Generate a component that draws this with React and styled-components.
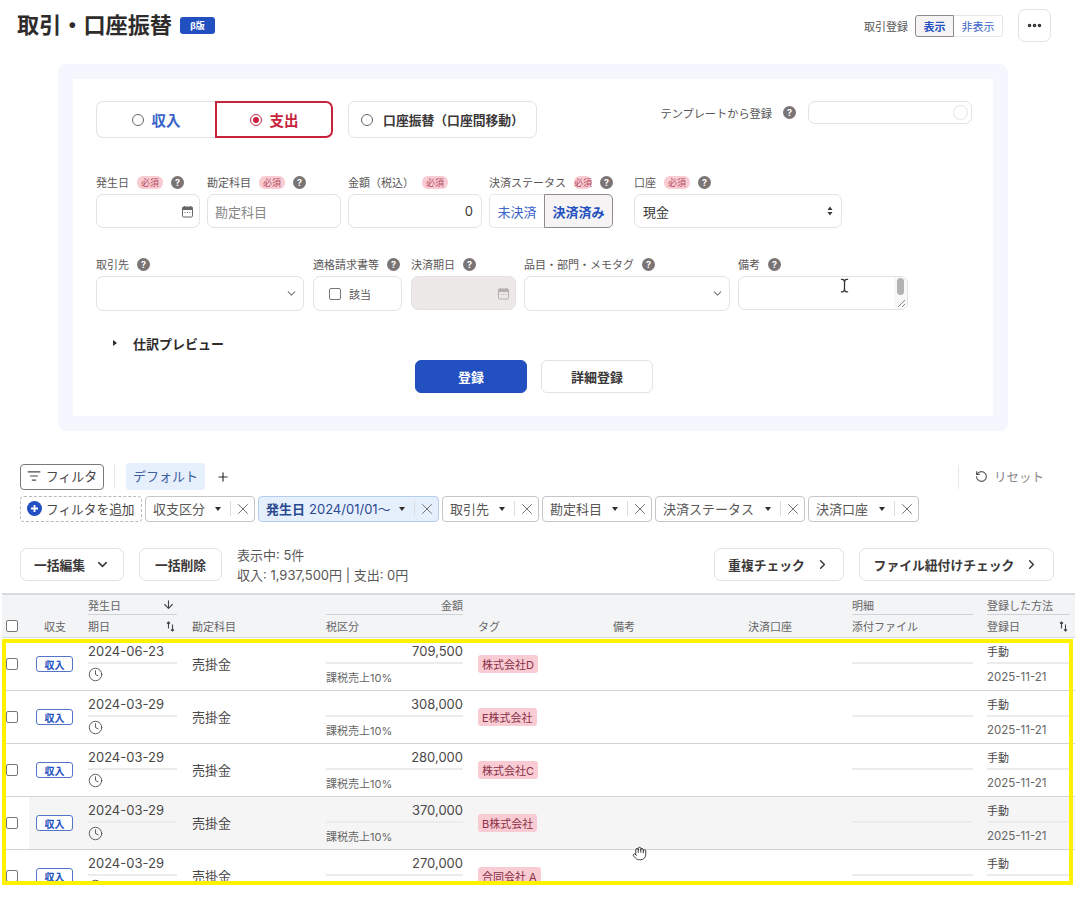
import React from 'react';
import styled, { createGlobalStyle } from 'styled-components';
import { ArrowDown, ChevronDown, ChevronRight, Clock, Ellipsis, Hand, ListFilter, Plus, RotateCcw, TextCursor, X } from 'lucide-react';

const GlobalStyle = createGlobalStyle`
  * { box-sizing: border-box; }
  html, body { margin: 0; padding: 0; background: #fff; overflow: hidden; }
  body {
    font-family: Inter, "Noto Sans CJK JP", sans-serif;
    color: #3b3838;
    width: 1075px;
    height: 898px;
  }
`;

const Header = styled.header`
  display: flex;
  align-items: center;
  height: 33px;
  margin-top: 9px;
  padding: 0 24px 0 17px;
`;
const Title = styled.h1`
  margin: 0;
  font-size: 22.15px;
  font-weight: 700;
  line-height: 33px;
  color: #2f2c2c;
`;
const BetaBadge = styled.span`
  margin-left: 8px;
  width: 35px;
  height: 17px;
  border-radius: 3px;
  background: #2350c0;
  color: #fff;
  font-size: 9px;
  font-weight: 700;
  display: flex;
  align-items: center;
  justify-content: center;
`;
const HeaderRight = styled.div`
  margin-left: auto;
  display: flex;
  align-items: center;
`;
const HeaderLabel = styled.span`
  font-size: 11px;
  color: #555;
  margin-right: 7px;
`;
const Toggle = styled.div`
  display: flex;
  height: 22px;
  margin-right: 15px;
`;
const ToggleItem = styled.span`
  width: ${p => p.$w}px;
  display: flex;
  align-items: center;
  justify-content: center;
  font-size: 11px;
  font-weight: ${p => (p.$active ? 700 : 400)};
  color: ${p => (p.$active ? '#2350c0' : '#3a64c8')};
  background: ${p => (p.$active ? '#f5f3f3' : '#fff')};
  border: 1px solid ${p => (p.$active ? '#8f8b8b' : '#e6e6e9')};
  border-left-width: ${p => (p.$active ? 1 : 0)}px;
  border-radius: ${p => (p.$active ? '3px 0 0 3px' : '0 3px 3px 0')};
`;
const MoreButton = styled.button`
  width: 33px;
  height: 33px;
  padding: 0;
  border: 1px solid #e2e2e6;
  border-radius: 7px;
  background: #fff;
  color: #2f2c2c;
  display: flex;
  align-items: center;
  justify-content: center;
`;

const Panel = styled.section`
  margin: 22px 67px 0 58px;
  padding: 15px;
  background: #f4f7fe;
  border-radius: 8px;
`;
const PanelInner = styled.div`
  background: #fff;
  height: 337px;
  padding-top: 22px;
`;
const TypeRow = styled.div`
  display: flex;
  align-items: flex-start;
  padding: 0 21px 0 23px;
`;
const TypeGroup = styled.div`
  display: flex;
  margin-right: 15px;
`;
const TypeButton = styled.div`
  width: ${p => p.$w}px;
  height: 37px;
  display: flex;
  align-items: center;
  justify-content: center;
  gap: ${p => p.$gap || 8}px;
  font-size: ${p => p.$size || 14.5}px;
  font-weight: 700;
  white-space: nowrap;
  color: ${p => p.$color};
  border: ${p => (p.$selected ? '2px solid #c8223c' : '1px solid #e2e2e6')};
  border-right-width: ${p => (p.$noRight ? 0 : p.$selected ? 2 : 1)}px;
  border-radius: ${p => p.$radius};
  background: #fff;
`;
const Radio = styled.span`
  width: 12px;
  height: 12px;
  flex: none;
  border-radius: 50%;
  border: 1px solid ${p => (p.$on ? '#c8223c' : '#666')};
  display: flex;
  align-items: center;
  justify-content: center;
  &::after {
    content: '';
    width: 6px;
    height: 6px;
    border-radius: 50%;
    background: ${p => (p.$on ? '#c8223c' : 'transparent')};
  }
`;
const TemplateArea = styled.div`
  margin-left: auto;
  display: flex;
  align-items: center;
  height: 23px;
`;
const TemplateLabel = styled.span`
  font-size: 11.2px;
  color: #555;
  margin-right: 5px;
`;
const TemplateInput = styled.div`
  width: 164px;
  height: 23px;
  margin-left: 12px;
  border: 1px solid #e2e2e6;
  border-radius: 7px;
  display: flex;
  align-items: center;
  justify-content: flex-end;
  padding-right: 3px;
`;
const Spinner = styled.span`
  width: 15px;
  height: 15px;
  border-radius: 50%;
  border: 1px solid #e4e4e6;
`;
const FieldRow = styled.div`
  display: flex;
  gap: ${p => p.$gap}px;
  margin-top: ${p => p.$top}px;
  padding-left: 23px;
`;
const Field = styled.div`
  width: ${p => p.$w}px;
  margin-left: ${p => p.$offset || 0}px;
  flex: none;
`;
const LabelLine = styled.div`
  height: 18px;
  margin-bottom: 3px;
  display: flex;
  align-items: center;
  white-space: nowrap;
  font-size: 11px;
  color: #5a5757;
`;
const Required = styled.span`
  margin-left: 8px;
  width: 26px;
  height: 13px;
  border-radius: 6px;
  background: #f9ccd3;
  color: #b54a60;
  font-size: 9px;
  display: flex;
  align-items: center;
  justify-content: center;
`;
const Help = styled.span`
  margin-left: ${p => p.$m || 8}px;
  width: 13px;
  height: 13px;
  flex: none;
  border-radius: 50%;
  background: #7a7474;
  color: #fff;
  font-size: 9px;
  font-weight: 700;
  display: flex;
  align-items: center;
  justify-content: center;
`;
const InputBox = styled.div`
  position: relative;
  height: ${p => p.$h || 34}px;
  border: 1px solid ${p => (p.$disabled ? '#e4e0df' : '#e2e2e6')};
  border-radius: 7px;
  background: ${p => (p.$disabled ? '#ece8e7' : '#fff')};
  display: flex;
  align-items: center;
  justify-content: ${p => p.$justify || 'flex-start'};
  gap: 8px;
  padding: 0 ${p => p.$pr || 8}px 0 ${p => p.$pl || 8}px;
  font-size: 13px;
  color: ${p => p.$color || '#3b3838'};
`;
const SmallText = styled.span`
  font-size: 11px;
`;
const Segmented = styled.div`
  display: flex;
  height: 34px;
`;
const Segment = styled.span`
  width: ${p => p.$w}px;
  display: flex;
  align-items: center;
  justify-content: center;
  white-space: nowrap;
  font-size: 13px;
  font-weight: ${p => (p.$active ? 700 : 400)};
  color: ${p => (p.$active ? '#2350c0' : '#3a64c8')};
  background: ${p => (p.$active ? '#f5f3f3' : '#fff')};
  border: 1px solid ${p => (p.$active ? '#8f8b8b' : '#e6e6e9')};
  border-right-width: ${p => (p.$active ? 1 : 0)}px;
  border-radius: ${p => (p.$active ? '0 5px 5px 0' : '5px 0 0 5px')};
`;
const CheckBox = styled.span`
  width: 12px;
  height: 12px;
  flex: none;
  border: 1px solid #777;
  border-radius: 2px;
  background: #fff;
`;
const ScrollTrack = styled.div`
  position: absolute;
  top: 0;
  right: 0;
  bottom: 0;
  width: 13px;
  background: #f8f8f8;
  border-radius: 0 6px 6px 0;
  display: flex;
  flex-direction: column;
  align-items: center;
  padding-top: 1px;
`;
const ScrollThumb = styled.span`
  width: 7px;
  height: 17px;
  border-radius: 4px;
  background: #b2b2b2;
`;
const ResizeMark = styled.svg`
  position: absolute;
  right: 1px;
  bottom: 1px;
`;
const IBeam = styled(TextCursor)`
  position: absolute;
  left: 98px;
  top: 1px;
  color: #333;
`;
const PreviewRow = styled.div`
  display: flex;
  align-items: center;
  height: 20px;
  margin-top: 22px;
  padding-left: 40px;
  font-size: 13px;
  font-weight: 700;
  color: #2f2c2c;
`;
const PreviewCaret = styled.span`
  width: 0;
  height: 0;
  margin-right: 16px;
  border-left: 4px solid #2f2c2c;
  border-top: 3.5px solid transparent;
  border-bottom: 3.5px solid transparent;
`;
const SubmitRow = styled.div`
  display: flex;
  justify-content: center;
  gap: 14px;
  margin-top: 7px;
  padding-left: 2px;
`;
const SubmitButton = styled.button`
  width: 112px;
  height: 33px;
  border-radius: 6px;
  border: 1px solid ${p => (p.$primary ? '#2350c0' : '#e2e2e6')};
  background: ${p => (p.$primary ? '#2350c0' : '#fff')};
  color: ${p => (p.$primary ? '#fff' : '#3b3838')};
  font: inherit;
  font-size: 13px;
  font-weight: 700;
`;

const FilterArea = styled.section`
  margin-top: 32px;
  padding: 0 30px 0 20px;
`;
const FilterBar = styled.div`
  display: flex;
  align-items: center;
  height: 27px;
`;
const FilterButton = styled.button`
  width: 84px;
  height: 26px;
  padding: 0 0 2px;
  border: 1px solid #7b7878;
  border-radius: 4px;
  background: #fff;
  font: inherit;
  font-size: 13px;
  color: #4a4747;
  display: flex;
  align-items: center;
  justify-content: center;
  gap: 5px;
`;
const VDivider = styled.span`
  width: 1px;
  height: 24px;
  background: #e8e8ea;
  margin: ${p => p.$margin};
`;
const DefaultTab = styled.span`
  width: 79px;
  height: 27px;
  padding-bottom: 2px;
  background: #e6effc;
  border-radius: 4px;
  font-size: 13px;
  color: #3f5f9f;
  display: flex;
  align-items: center;
  justify-content: center;
`;
const PlusWrap = styled.span`
  margin-left: 11px;
  display: flex;
  color: #2f2c2c;
`;
const ResetLink = styled.span`
  margin-left: auto;
  display: flex;
  align-items: center;
  gap: 6px;
  font-size: 12.5px;
  color: #8a8787;
  width: 87px;
  white-space: nowrap;
`;
const ChipRow = styled.div`
  display: flex;
  gap: 3px;
  margin-top: 6px;
  height: 26px;
`;
const AddFilter = styled.span`
  width: 122px;
  border: 1px dashed #b9b9bd;
  border-radius: 4px;
  font-size: 12.7px;
  color: #4a4747;
  display: flex;
  align-items: center;
  gap: 4px;
  padding: 0 0 1px 6px;
`;
const Chip = styled.span`
  width: ${p => p.$w}px;
  border: 1px solid ${p => (p.$active ? '#b7cdf0' : '#c5c5ca')};
  border-radius: 4px;
  background: ${p => (p.$active ? '#e6effc' : '#fff')};
  color: ${p => (p.$active ? '#2a4a90' : '#5a5757')};
  font-size: 13px;
  white-space: nowrap;
  display: flex;
  align-items: center;
  padding: 0 0 1px 7px;
  b { font-weight: 700; margin-right: 4px; }
`;
const ChipCaret = styled.span`
  margin-left: auto;
  margin-right: 9px;
  width: 0;
  height: 0;
  border-top: 4px solid #2f2c2c;
  border-left: 3.5px solid transparent;
  border-right: 3.5px solid transparent;
`;
const ChipClose = styled.span`
  width: 24px;
  height: 15px;
  flex: none;
  border-left: 1px solid #dcdce0;
  color: #666;
  display: flex;
  align-items: center;
  justify-content: center;
`;
const ActionRow = styled.div`
  display: flex;
  align-items: center;
  height: 33px;
  margin-top: 26px;
  padding: 0 21px 0 20px;
`;
const ActionButton = styled.button`
  width: ${p => p.$w}px;
  height: 33px;
  padding: 0;
  margin-right: ${p => p.$mr || 0}px;
  border: 1px solid #e2e2e6;
  border-radius: 7px;
  background: #fff;
  font: inherit;
  font-size: 12.8px;
  font-weight: 700;
  white-space: nowrap;
  color: #3b3838;
  display: flex;
  align-items: center;
  justify-content: center;
  gap: 10px;
`;
const Summary = styled.div`
  font-size: 13px;
  line-height: 20px;
  color: #5a5757;
  margin-top: 1px;
`;
const ActionRight = styled.div`
  margin-left: auto;
  display: flex;
`;

const columns = '27px 59px 104px 134px 152px 135px 135px 104px 135px 88px';

const TableWrap = styled.section`
  position: relative;
  margin: 12px 0 0 2px;
  height: 292px;
  overflow: hidden;
`;
const HeadRow = styled.div`
  display: grid;
  grid-template-columns: ${columns};
  height: 45px;
  background: #f3f4f6;
  border-top: 2px solid #d8dbde;
  border-bottom: 1px solid #d8dbde;
  font-size: 11px;
  color: #666;
`;
const HeadCell = styled.div`
  display: flex;
  flex-direction: column;
  justify-content: flex-end;
  padding-right: ${p => p.$pr ?? 15}px;
  padding-left: ${p => p.$pl || 0}px;
  white-space: nowrap;
`;
const HeadTop = styled.div`
  height: 20px;
  display: flex;
  align-items: center;
  justify-content: ${p => (p.$right ? 'flex-end' : 'space-between')};
  border-bottom: 1px solid #cfd2d6;
`;
const HeadBottom = styled.div`
  height: 22px;
  display: flex;
  align-items: center;
  justify-content: space-between;
  padding-right: 2px;
`;
const HeadCheck = styled(CheckBox)`
  margin: 0 0 5px 4px;
`;
const SortArrow = styled(ArrowDown)`
  margin-right: 2px;
  color: #444;
`;
const Row = styled.div`
  display: grid;
  grid-template-columns: ${columns};
  height: 53px;
  border-bottom: 1px solid #cdd5d5;
  & > *:not(:first-child) {
    background: ${p => (p.$hover ? '#f5f5f5' : '#fff')};
  }
`;
const CenterCell = styled.div`
  display: flex;
  align-items: center;
  padding-left: ${p => p.$pl || 0}px;
  font-size: 13px;
  color: #4a4747;
`;
const AccountName = styled.span`
  margin-bottom: 2px;
`;
const Stack = styled.div`
  display: flex;
  flex-direction: column;
  padding-right: ${p => p.$pr ?? 15}px;
`;
const StackTop = styled.div`
  height: 26px;
  padding-top: 1px;
  display: flex;
  align-items: center;
  justify-content: ${p => (p.$right ? 'flex-end' : 'flex-start')};
  border-bottom: 2px solid #ececec;
  font-size: ${p => p.$size || 13}px;
  color: #4a4747;
`;
const StackBottom = styled.div`
  flex: 1;
  display: flex;
  align-items: center;
  font-size: ${p => p.$size || 11}px;
  color: #666;
`;
const ClockMark = styled(Clock)`
  margin: 0 0 6px 0;
  color: #555;
`;
const TypeBadge = styled.span`
  width: 37px;
  height: 16px;
  border: 1px solid #5575c8;
  border-radius: 3px;
  background: #fff;
  color: #2350c0;
  font-size: 10px;
  font-weight: 700;
  display: flex;
  align-items: center;
  justify-content: center;
  margin-left: 7px;
`;
const Tag = styled.span`
  height: 18px;
  padding: 0 4px;
  border-radius: 3px;
  background: #f9ccd3;
  color: #8a3048;
  font-size: 11px;
  display: flex;
  align-items: center;
`;
const YellowFrame = styled.div`
  position: absolute;
  top: 46px;
  left: 0;
  width: 1071px;
  height: 246px;
  border: 4px solid #fff200;
  pointer-events: none;
`;
const HandCursor = styled(Hand)`
  position: absolute;
  left: 630px;
  top: 253px;
  color: #333;
`;

const CalendarIcon = ({ color = '#666' }) => (
  <svg width="13" height="13" viewBox="0 0 13 13" fill="none">
    <rect x="1.5" y="2" width="10" height="10" rx="1.2" stroke={color} />
    <rect x="1.5" y="2" width="10" height="3" fill={color} />
    <path d="M3.5 1v2M9.5 1v2" stroke={color} />
    <path d="M3.5 7.5h1M6 7.5h1M8.5 7.5h1" stroke={color} />
  </svg>
);

const SelectArrows = () => (
  <svg width="6" height="10" viewBox="0 0 6 10" fill="#3b3838">
    <path d="M3 0.5 5.5 4h-5zM3 9.5.5 6h5z" />
  </svg>
);

const SortIcon = () => (
  <svg width="9" height="11" viewBox="0 0 9 11" fill="none" stroke="#444" strokeWidth="1.1">
    <path d="M2.5 7.5V1M1 2.5 2.5 1 4 2.5M6.5 3.5V10M5 8.5 6.5 10 8 8.5" />
  </svg>
);

const AddIcon = () => (
  <svg width="15" height="15" viewBox="0 0 15 15">
    <circle cx="7.5" cy="7.5" r="7.5" fill="#2350c0" />
    <path d="M7.5 4v7M4 7.5h7" stroke="#fff" strokeWidth="1.8" />
  </svg>
);

const chips = [
  { label: '収支区分', w: 110 },
  { label: '2024/01/01〜', strong: '発生日', w: 181, active: true },
  { label: '取引先', w: 97 },
  { label: '勘定科目', w: 110 },
  { label: '決済ステータス', w: 150 },
  { label: '決済口座', w: 111 },
];

const rows = [
  { date: '2024-06-23', amount: '709,500', tag: '株式会社D' },
  { date: '2024-03-29', amount: '308,000', tag: 'E株式会社' },
  { date: '2024-03-29', amount: '280,000', tag: '株式会社C' },
  { date: '2024-03-29', amount: '370,000', tag: 'B株式会社', hover: true },
  { date: '2024-03-29', amount: '270,000', tag: '合同会社 A' },
];

export default function App() {
  return (
    <>
      <GlobalStyle />
      <Header>
        <Title>取引・口座振替</Title>
        <BetaBadge>β版</BetaBadge>
        <HeaderRight>
          <HeaderLabel>取引登録</HeaderLabel>
          <Toggle>
            <ToggleItem $w={39} $active>表示</ToggleItem>
            <ToggleItem $w={49}>非表示</ToggleItem>
          </Toggle>
          <MoreButton><Ellipsis size={17} strokeWidth={3} /></MoreButton>
        </HeaderRight>
      </Header>

      <Panel>
        <PanelInner>
          <TypeRow>
            <TypeGroup>
              <TypeButton $w={119} $color="#3a64c8" $radius="7px 0 0 7px" $noRight><Radio />収入</TypeButton>
              <TypeButton $w={118} $color="#c8223c" $radius="0 7px 7px 0" $selected><Radio $on />支出</TypeButton>
            </TypeGroup>
            <TypeButton $w={189} $size={12.8} $gap={10} $color="#3b3838" $radius="7px">
              <Radio />口座振替（口座間移動）
            </TypeButton>
            <TemplateArea>
              <TemplateLabel>テンプレートから登録</TemplateLabel>
              <Help $m={6}>?</Help>
              <TemplateInput><Spinner /></TemplateInput>
            </TemplateArea>
          </TypeRow>

          <FieldRow $gap={7} $top={35}>
            <Field $w={104}>
              <LabelLine>発生日<Required>必須</Required><Help>?</Help></LabelLine>
              <InputBox $justify="flex-end" $pr={5}><CalendarIcon /></InputBox>
            </Field>
            <Field $w={134}>
              <LabelLine>勘定科目<Required>必須</Required><Help>?</Help></LabelLine>
              <InputBox $color="#8a8787" $pl={7}>勘定科目</InputBox>
            </Field>
            <Field $w={134}>
              <LabelLine>金額（税込）<Required>必須</Required></LabelLine>
              <InputBox $justify="flex-end">0</InputBox>
            </Field>
            <Field $w={124}>
              <LabelLine>決済ステータス<Required>必須</Required><Help>?</Help></LabelLine>
              <Segmented>
                <Segment $w={55}>未決済</Segment>
                <Segment $w={69} $active>決済済み</Segment>
              </Segmented>
            </Field>
            <Field $w={208} $offset={14}>
              <LabelLine>口座<Required>必須</Required><Help>?</Help></LabelLine>
              <InputBox $justify="space-between"><span>現金</span><SelectArrows /></InputBox>
            </Field>
          </FieldRow>

          <FieldRow $gap={8} $top={27}>
            <Field $w={208}>
              <LabelLine>取引先<Help>?</Help></LabelLine>
              <InputBox $h={35} $justify="flex-end" $pr={5}><ChevronDown size={13} color="#777" /></InputBox>
            </Field>
            <Field $w={89} $offset={1}>
              <LabelLine>適格請求書等<Help>?</Help></LabelLine>
              <InputBox $h={35} $pl={15} $color="#5a5757"><CheckBox /><SmallText>該当</SmallText></InputBox>
            </Field>
            <Field $w={105} $offset={1}>
              <LabelLine>決済期日<Help>?</Help></LabelLine>
              <InputBox $disabled $justify="flex-end" $pr={5}><CalendarIcon color="#b5b0af" /></InputBox>
            </Field>
            <Field $w={206}>
              <LabelLine>品目・部門・メモタグ<Help>?</Help></LabelLine>
              <InputBox $h={35} $justify="flex-end" $pr={5}><ChevronDown size={13} color="#777" /></InputBox>
            </Field>
            <Field $w={170}>
              <LabelLine>備考<Help>?</Help></LabelLine>
              <InputBox>
                <IBeam size={15} />
                <ScrollTrack><ScrollThumb /></ScrollTrack>
                <ResizeMark width="9" height="9" viewBox="0 0 9 9" stroke="#888" fill="none">
                  <path d="M1 8 8 1M5 8l3-3" />
                </ResizeMark>
              </InputBox>
            </Field>
          </FieldRow>

          <PreviewRow><PreviewCaret />仕訳プレビュー</PreviewRow>
          <SubmitRow>
            <SubmitButton $primary>登録</SubmitButton>
            <SubmitButton>詳細登録</SubmitButton>
          </SubmitRow>
        </PanelInner>
      </Panel>

      <FilterArea>
        <FilterBar>
          <FilterButton><ListFilter size={14} />フィルタ</FilterButton>
          <VDivider $margin="0 11px 0 10px" />
          <DefaultTab>デフォルト</DefaultTab>
          <PlusWrap><Plus size={14} /></PlusWrap>
          <ResetLink>
            <VDivider $margin="0 10px 0 0" />
            <RotateCcw size={13} color="#555" />リセット
          </ResetLink>
        </FilterBar>
        <ChipRow>
          <AddFilter><AddIcon />フィルタを追加</AddFilter>
          {chips.map(c => (
            <Chip key={c.label} $w={c.w} $active={c.active}>
              {c.strong && <b>{c.strong}</b>}
              {c.label}
              <ChipCaret />
              <ChipClose><X size={18} strokeWidth={1.2} /></ChipClose>
            </Chip>
          ))}
        </ChipRow>
      </FilterArea>

      <ActionRow>
        <ActionButton $w={104} $mr={15}>一括編集<ChevronDown size={15} strokeWidth={2.4} /></ActionButton>
        <ActionButton $w={83} $mr={15}>一括削除</ActionButton>
        <Summary>
          <div>表示中: 5件</div>
          <div>収入: 1,937,500円 | 支出: 0円</div>
        </Summary>
        <ActionRight>
          <ActionButton $w={130} $mr={15}>重複チェック<ChevronRight size={15} strokeWidth={2.4} /></ActionButton>
          <ActionButton $w={195}>ファイル紐付けチェック<ChevronRight size={15} strokeWidth={2.4} /></ActionButton>
        </ActionRight>
      </ActionRow>

      <TableWrap>
        <HeadRow>
          <HeadCell $pr={0}><HeadCheck /></HeadCell>
          <HeadCell $pr={0} $pl={15}><HeadBottom>収支</HeadBottom></HeadCell>
          <HeadCell>
            <HeadTop>発生日<SortArrow size={13} /></HeadTop>
            <HeadBottom>期日<SortIcon /></HeadBottom>
          </HeadCell>
          <HeadCell><HeadBottom>勘定科目</HeadBottom></HeadCell>
          <HeadCell>
            <HeadTop $right>金額</HeadTop>
            <HeadBottom>税区分</HeadBottom>
          </HeadCell>
          <HeadCell><HeadBottom>タグ</HeadBottom></HeadCell>
          <HeadCell><HeadBottom>備考</HeadBottom></HeadCell>
          <HeadCell><HeadBottom>決済口座</HeadBottom></HeadCell>
          <HeadCell $pr={14}>
            <HeadTop>明細</HeadTop>
            <HeadBottom>添付ファイル</HeadBottom>
          </HeadCell>
          <HeadCell $pr={5}>
            <HeadTop>登録した方法</HeadTop>
            <HeadBottom>登録日<SortIcon /></HeadBottom>
          </HeadCell>
        </HeadRow>

        {rows.map(r => (
          <Row key={r.tag} $hover={r.hover}>
            <CenterCell $pl={4}><CheckBox /></CenterCell>
            <CenterCell><TypeBadge>収入</TypeBadge></CenterCell>
            <Stack>
              <StackTop>{r.date}</StackTop>
              <StackBottom><ClockMark size={15} strokeWidth={1.5} /></StackBottom>
            </Stack>
            <CenterCell><AccountName>売掛金</AccountName></CenterCell>
            <Stack>
              <StackTop $right>{r.amount}</StackTop>
              <StackBottom>課税売上10%</StackBottom>
            </Stack>
            <CenterCell><Tag>{r.tag}</Tag></CenterCell>
            <CenterCell />
            <CenterCell />
            <Stack $pr={14}>
              <StackTop />
              <StackBottom />
            </Stack>
            <Stack $pr={5}>
              <StackTop $size={11}>手動</StackTop>
              <StackBottom $size={11.5}>2025-11-21</StackBottom>
            </Stack>
          </Row>
        ))}
        <HandCursor size={15} strokeWidth={1.5} />
        <YellowFrame />
      </TableWrap>
    </>
  );
}
